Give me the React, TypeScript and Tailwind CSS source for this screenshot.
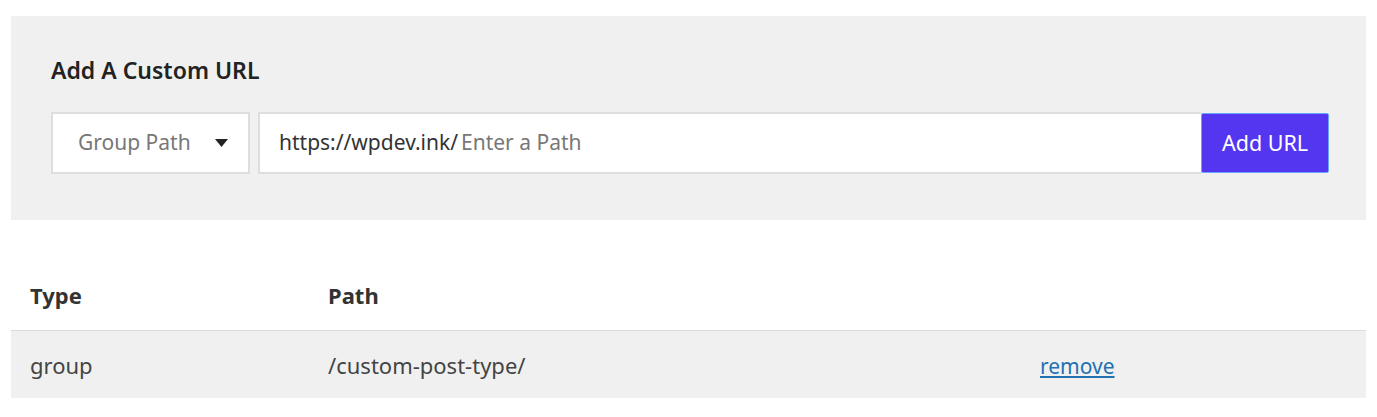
const rows = [{ type: "group", path: "/custom-post-type/" }];

const App = () => {
  return (
    <div className="min-h-[417px] bg-white pt-4 px-[11px] font-['Noto_Sans',sans-serif] text-[#333]">
      {/* Add form panel */}
      <div className="bg-[#f0f0f0] h-[204px] pl-10 pr-[37px] pt-[38px]">
        <h2 className="text-[23px] leading-[32px] font-semibold text-[#222]">Add A Custom URL</h2>
        <div className="flex mt-[26px] h-[62px]">
          <div className="w-[199px] bg-white border-2 border-[#dedede] flex items-center justify-between pl-[25px] pr-[20px] text-[21px] text-[#777]">
            <span>Group Path</span>
            <svg width="13" height="8" viewBox="0 0 13 8" className="fill-[#222]">
              <path d="M0 0h13L6.5 8z" />
            </svg>
          </div>
          <div className="flex-1 ml-2 bg-white border-2 border-r-0 border-[#dedede] flex items-center pl-[19px] text-[21px]">
            <span className="text-[#333]">https://wpdev.ink/</span>
            <input
              className="flex-1 outline-none bg-transparent text-[21px] ml-[3px] placeholder:text-[#777]"
              placeholder="Enter a Path"
            />
          </div>
          <button className="w-[128px] my-px bg-[#5536f0] border border-[#6aa4ff] rounded-[2px] text-white text-[21.5px]">
            Add URL
          </button>
        </div>
      </div>

      {/* URL list */}
      <table className="w-full mt-[42px] border-collapse text-[22px]">
        <thead>
          <tr className="border-b border-[#dcdcdc] h-[68px] text-left">
            <th className="w-[298px] pl-[19px] font-bold text-[#333]">Type</th>
            <th className="w-[712px] pl-[19px] font-bold text-[#333]">Path</th>
            <th></th>
          </tr>
        </thead>
        <tbody>
          {rows.map((r) => (
            <tr key={r.path} className="bg-[#f0f0f0] h-[68px] text-[#444]">
              <td className="pl-[19px] pt-[3px]">{r.type}</td>
              <td className="pl-[19px] pt-[3px]">{r.path}</td>
              <td className="pl-[19px] pt-[3px]">
                <a href="#" className="text-[#2271b1] underline text-[21px]">remove</a>
              </td>
            </tr>
          ))}
        </tbody>
      </table>
    </div>
  );
};

export default App;
